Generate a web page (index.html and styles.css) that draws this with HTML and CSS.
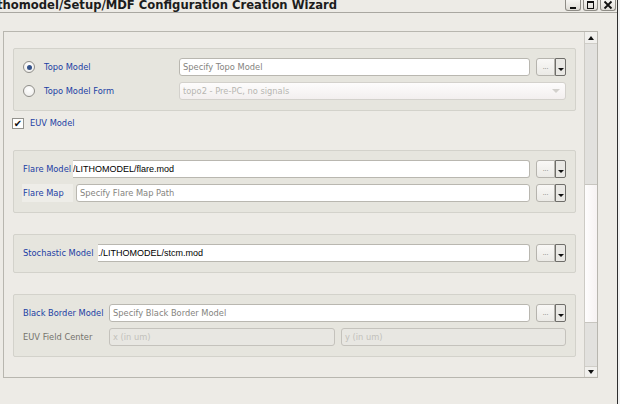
FILE: index.html
```html
<!DOCTYPE html>
<html>
<head>
<meta charset="utf-8">
<link rel="stylesheet" href="styles.css">
</head>
<body>
<div class="window">
  <div class="titlebar">
    <span class="title">lithomodel/Setup/MDF Configuration Creation Wizard</span>
    <div class="wbtns">
      <div class="wbtn wmin"><svg width="14" height="10" viewBox="0 0 14 10"><rect x="4" y="7" width="6" height="2" fill="#111"/></svg></div>
      <div class="wbtn wmax"><svg width="13" height="10" viewBox="0 0 13 10"><rect x="3.5" y="1.5" width="6" height="7" fill="none" stroke="#111" stroke-width="1"/><rect x="3" y="1" width="7" height="2" fill="#111"/></svg></div>
      <div class="wbtn wclose"><svg width="14" height="10" viewBox="0 0 14 10"><path d="M3.5 1.5 L10.5 8.5 M10.5 1.5 L3.5 8.5" stroke="#111" stroke-width="1.8"/></svg></div>
    </div>
  </div>
  <div class="frame">
    <div class="content">
      <div class="group">
        <div class="row">
          <span class="radio on"></span>
          <span class="lbl w135">Topo Model</span>
          <div class="field"><span class="ph">Specify Topo Model</span></div>
          <div class="dots">...</div><div class="dd"></div>
        </div>
        <div class="row">
          <span class="radio"></span>
          <span class="lbl w135">Topo Model Form</span>
          <div class="combo"><span class="dis">topo2 - Pre-PC, no signals</span><span class="carrow"></span></div>
        </div>
      </div>
      <div class="check-row">
        <span class="check">&#10004;</span>
        <span class="lbl">EUV Model</span>
      </div>
      <div class="group gap21">
        <div class="row">
          <span class="lbl w50">Flare Model</span>
          <div class="field noleft"><span class="val">/LITHOMODEL/flare.mod</span></div>
          <div class="dots">...</div><div class="dd"></div>
        </div>
        <div class="row">
          <span class="lbl boxed">Flare Map</span>
          <div class="field"><span class="ph">Specify Flare Map Path</span></div>
          <div class="dots">...</div><div class="dd"></div>
        </div>
      </div>
      <div class="group gap21">
        <div class="row">
          <span class="lbl w75">Stochastic Model</span>
          <div class="field noleft"><span class="val">./LITHOMODEL/stcm.mod</span></div>
          <div class="dots">...</div><div class="dd"></div>
        </div>
      </div>
      <div class="group gap21">
        <div class="row">
          <span class="lbl w86">Black Border Model</span>
          <div class="field"><span class="ph">Specify Black Border Model</span></div>
          <div class="dots">...</div><div class="dd"></div>
        </div>
        <div class="row">
          <span class="lbl w86 grey">EUV Field Center</span>
          <div class="field disabled w226"><span class="dis2">x (in um)</span></div>
          <div class="field disabled"><span class="dis2">y (in um)</span></div>
        </div>
      </div>
    </div>
    <div class="vscroll">
      <div class="sbtn up"><span class="tri-up"></span></div>
      <div class="trough t1"></div>
      <div class="thumb"></div>
      <div class="trough t2"></div>
      <div class="sbtn down"><span class="tri-down"></span></div>
    </div>
  </div>
</div>
<div class="desk"></div>
</body>
</html>
```
FILE: styles.css
```css
html, body {
  margin: 0;
  padding: 0;
}
body {
  width: 620px;
  height: 404px;
  overflow: hidden;
  display: flex;
  background: #f4f4f4;
  font-family: "DejaVu Sans", sans-serif;
}
.window {
  width: 617px;
  height: 404px;
  background: #edebe6;
  border-right: 1px solid #2e2e2e;
  display: flex;
  flex-direction: column;
  overflow: hidden;
}
.desk {
  width: 2px;
  height: 404px;
  background: #f2f2f2;
}
.titlebar {
  height: 12px;
  border-bottom: 1px solid #a9a7a1;
  display: flex;
  align-items: flex-start;
  overflow: hidden;
  flex: none;
}
.title {
  font-family: "DejaVu Sans", sans-serif;
  font-weight: bold;
  font-size: 11.6px;
  line-height: 11px;
  color: #1c1c1c;
  margin-left: -11px;
  white-space: nowrap;
}
.wbtns {
  margin-left: auto;
  margin-right: 1px;
  display: flex;
  gap: 2px;
}
.wbtn {
  height: 11px;
  box-sizing: border-box;
  border: 1px solid #8e8c86;
  border-top: none;
  border-radius: 0 0 3px 3px;
  background: linear-gradient(#f6f5f2, #dedcd6);
  display: flex;
  align-items: center;
  justify-content: center;
}
.wmin { width: 16px; }
.wmax { width: 15px; }
.wclose { width: 16px; }
.frame {
  margin: 18px 0 0 3px;
  width: 595px;
  height: 347px;
  box-sizing: border-box;
  border: 1px solid #b8b6af;
  display: flex;
  flex: none;
}
.content {
  flex: 1;
  padding: 16px 8px 0 9px;
}
.group {
  background: #e6e5de;
  border: 1px solid #d3d2cb;
  border-radius: 2px;
  padding: 9px 9px 10px 9px;
  display: flex;
  flex-direction: column;
  gap: 6px;
}
.gap21 { margin-top: 21px; }
.row {
  display: flex;
  align-items: center;
  height: 18px;
}
.lbl {
  font-size: 8.3px;
  color: #1c3ea4;
  white-space: nowrap;
  flex: none;
  line-height: 18px;
}
.lbl.grey { color: #74736c; }
.w135 { width: 135px; }
.w50 { width: 50px; }
.w75 { width: 75px; }
.w86 { width: 86px; }
.boxed {
  width: 46px;
  margin-left: -1px;
  margin-right: 3px;
  padding-left: 1px;
  padding-right: 4px;
  background: #eeede8;
}
.radio {
  width: 12px;
  height: 12px;
  box-sizing: border-box;
  border: 1px solid #8f8e89;
  border-radius: 50%;
  background: radial-gradient(circle at 50% 35%, #ffffff, #ecebe8);
  margin-right: 9px;
  flex: none;
  display: flex;
  align-items: center;
  justify-content: center;
}
.radio.on::after {
  content: "";
  width: 5px;
  height: 5px;
  border-radius: 50%;
  background: #34528a;
}
.field {
  flex: 1;
  height: 18px;
  box-sizing: border-box;
  background: #fff;
  border: 1px solid #b9b7b0;
  border-radius: 3px;
  overflow: hidden;
  white-space: nowrap;
  display: flex;
  align-items: center;
  padding-left: 3px;
}
.field.noleft {
  border-left: none;
  border-radius: 0 3px 3px 0;
  padding-left: 0;
}
.field.disabled {
  background: #e8e7e2;
  border-color: #c4c2bc;
}
.w226 {
  flex: none;
  width: 226px;
  margin-right: 6px;
}
.ph {
  font-size: 8.3px;
  color: #858480;
}
.dis {
  font-size: 8.3px;
  color: #b7b6b1;
}
.dis2 {
  font-size: 8.3px;
  color: #c2c1bb;
}
.val {
  font-family: "Liberation Sans", sans-serif;
  font-size: 9px;
  color: #000;
}
.dots {
  flex: none;
  width: 19px;
  height: 18px;
  box-sizing: border-box;
  margin-left: 6px;
  border: 1px solid #b6b4ae;
  border-radius: 3px 0 0 3px;
  background: linear-gradient(#f9f8f6, #ebeae6);
  font-size: 6px;
  color: #5e5d59;
  text-align: center;
  line-height: 15px;
}
.dd {
  flex: none;
  width: 11px;
  height: 18px;
  box-sizing: border-box;
  border: 1px solid #6f6e6a;
  border-radius: 0 2px 2px 0;
  background: #e9e8e4;
  position: relative;
}
.dd::after {
  content: "";
  position: absolute;
  left: 2px;
  bottom: 4px;
  border-left: 3px solid transparent;
  border-right: 3px solid transparent;
  border-top: 3px solid #111;
}
.combo {
  flex: 1;
  height: 18px;
  box-sizing: border-box;
  border: 1px solid #d3d1cc;
  border-radius: 3px;
  background: linear-gradient(#fdfcfc, #f3efef);
  display: flex;
  align-items: center;
  padding-left: 3px;
  padding-right: 5px;
}
.carrow {
  margin-left: auto;
  border-left: 4px solid transparent;
  border-right: 4px solid transparent;
  border-top: 4px solid #d2d0cc;
}
.check-row {
  display: flex;
  align-items: center;
  margin-top: 7px;
  margin-left: -1px;
  height: 11px;
}
.check {
  width: 12px;
  height: 11px;
  box-sizing: border-box;
  border: 1px solid #93928d;
  background: #fff;
  font-size: 10px;
  line-height: 9px;
  color: #111;
  text-align: center;
  margin-right: 6px;
  flex: none;
  overflow: hidden;
}
.check-row .lbl { line-height: 11px; }
.vscroll {
  width: 13px;
  box-sizing: border-box;
  border-left: 1px solid #cdcbc5;
  display: flex;
  flex-direction: column;
  flex: none;
}
.sbtn {
  display: flex;
  align-items: center;
  justify-content: center;
  background: #f1f0ed;
}
.sbtn.up { height: 12px; border-bottom: 1px solid #d0cec8; box-sizing: border-box; }
.sbtn.down { height: 10px; border-top: 1px solid #d0cec8; box-sizing: border-box; }
.tri-up {
  border-left: 3px solid transparent;
  border-right: 3px solid transparent;
  border-bottom: 4px solid #111;
}
.tri-down {
  border-left: 3px solid transparent;
  border-right: 3px solid transparent;
  border-top: 4px solid #111;
}
.trough { background: #e2e1de; }
.t1 { height: 140px; }
.t2 { height: 43px; }
.thumb {
  height: 139px;
  box-sizing: border-box;
  border-top: 1px solid #c7c5bf;
  border-bottom: 1px solid #c7c5bf;
  background: linear-gradient(to right, #fefdfd, #f6f2f2);
}
```
